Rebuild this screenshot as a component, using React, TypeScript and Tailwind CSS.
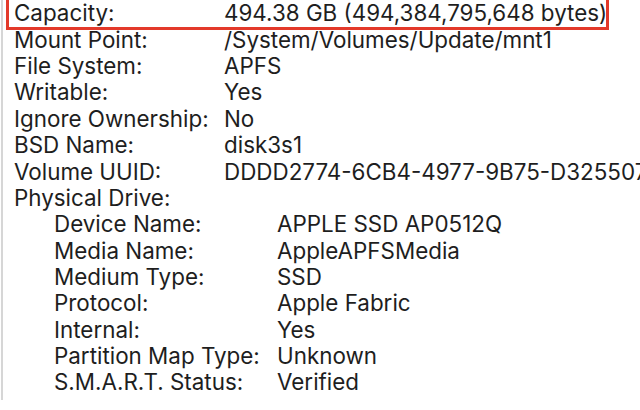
import React from 'react'

type Row = { label: string; value: string; sub?: boolean }

const rows: Row[] = [
  { label: 'Capacity:', value: '494.38 GB (494,384,795,648 bytes)' },
  { label: 'Mount Point:', value: '/System/Volumes/Update/mnt1' },
  { label: 'File System:', value: 'APFS' },
  { label: 'Writable:', value: 'Yes' },
  { label: 'Ignore Ownership:', value: 'No' },
  { label: 'BSD Name:', value: 'disk3s1' },
  { label: 'Volume UUID:', value: 'DDDD2774-6CB4-4977-9B75-D3255078A1F2' },
  { label: 'Physical Drive:', value: '' },
  { label: 'Device Name:', value: 'APPLE SSD AP0512Q', sub: true },
  { label: 'Media Name:', value: 'AppleAPFSMedia', sub: true },
  { label: 'Medium Type:', value: 'SSD', sub: true },
  { label: 'Protocol:', value: 'Apple Fabric', sub: true },
  { label: 'Internal:', value: 'Yes', sub: true },
  { label: 'Partition Map Type:', value: 'Unknown', sub: true },
  { label: 'S.M.A.R.T. Status:', value: 'Verified', sub: true },
]

const App = () => {
  return (
    <div className="relative h-[410px] w-[640px] overflow-hidden bg-white">
      <div className="flex h-[400px] border-l-2 border-[#d6d6d6] ml-[1px]">
        <div className="flex flex-col pl-[11px] font-['Inter',sans-serif] text-[22.4px] text-[#1e1e1e]">
          {rows.map((r) => (
            <div key={r.label} className="flex h-[26.36px] items-center whitespace-nowrap">
              <span className={r.sub ? 'w-[263px] shrink-0 pl-[40px]' : 'w-[210px] shrink-0'}>{r.label}</span>
              <span>{r.value}</span>
            </div>
          ))}
        </div>
      </div>
      {/* highlight around the capacity row */}
      <div className="absolute left-[6px] top-[-3px] h-[33px] w-[603px] border-[3px] border-[#e3392a]" />
    </div>
  )
}

export default App
